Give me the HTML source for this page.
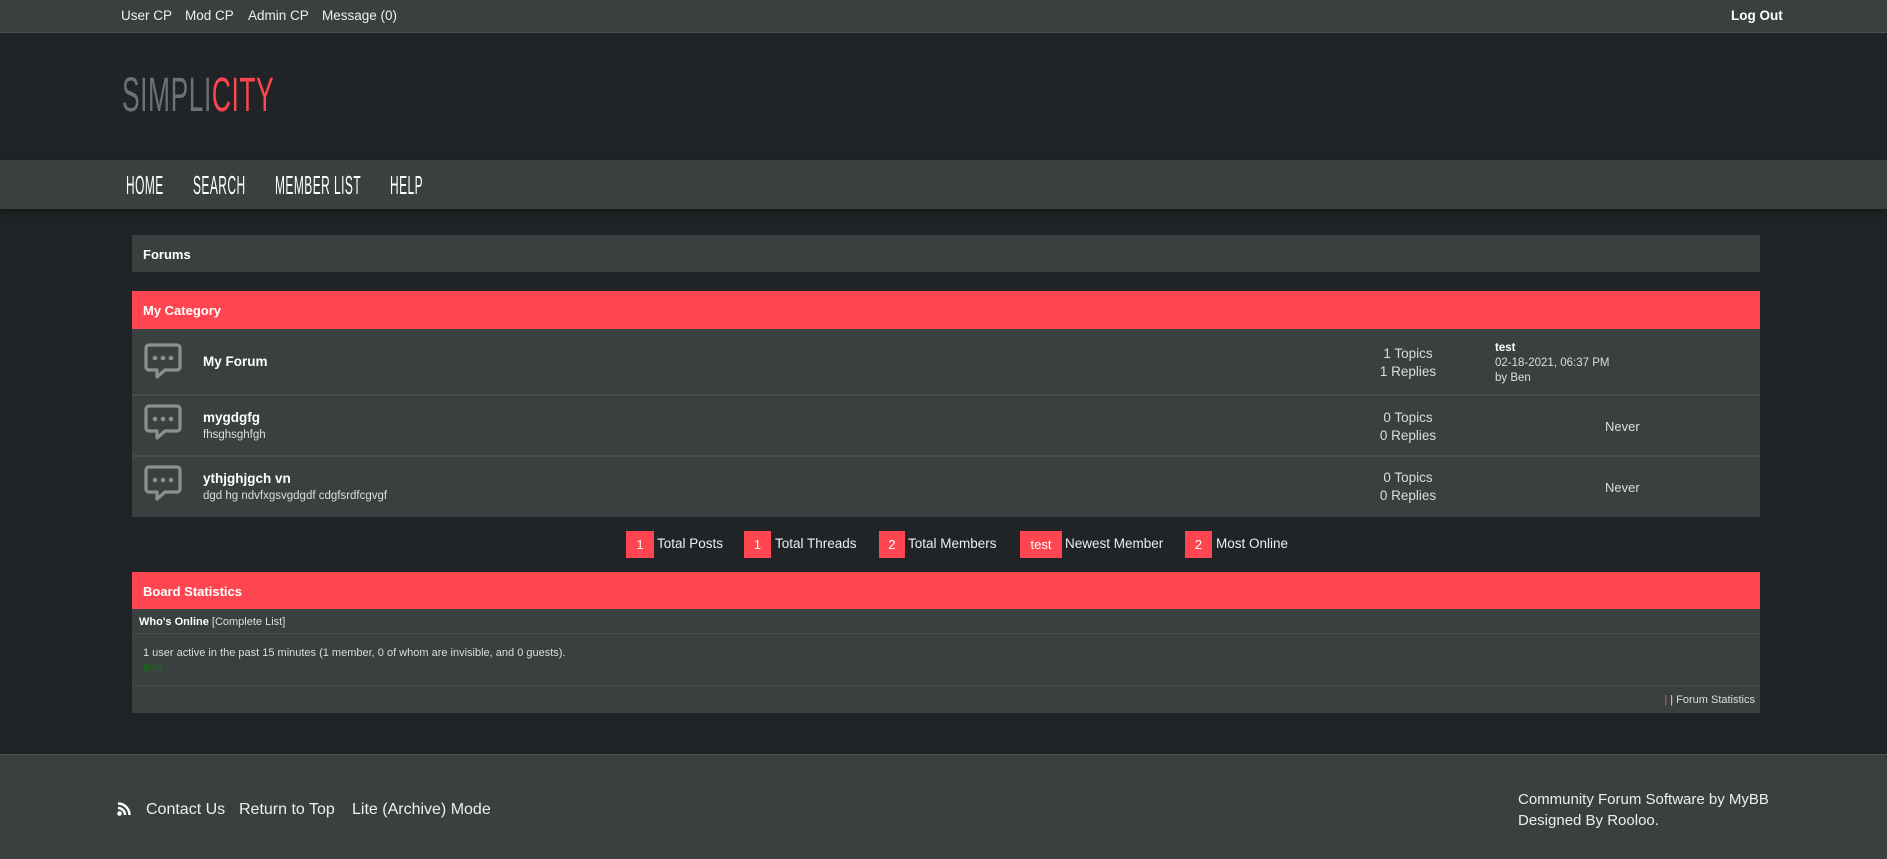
<!DOCTYPE html>
<html><head><meta charset="utf-8"><style>
*{margin:0;padding:0;box-sizing:border-box}
body{width:1887px;height:859px;background:#212426;font-family:"Liberation Sans",sans-serif;color:#fff;position:relative;overflow:hidden}
.a{position:absolute;white-space:nowrap}
.topbar{position:absolute;left:0;top:0;width:1887px;height:33px;background:#3a3f40;border-bottom:1px solid #4c5152}
.top{font-size:13.5px;top:8px;color:#eee}
.nav{position:absolute;left:0;top:160px;width:1887px;height:49px;background:#3a3f40;box-shadow:0 4px 8px rgba(0,0,0,.35)}
.navi{font-size:26px;top:170px;transform:scaleX(.46);transform-origin:left top;color:#fff;letter-spacing:1px}
.box{position:absolute;left:132px;width:1628px;background:#3a3f40}
.red{background:#ff4650}
.b{font-weight:bold}
.sep{position:absolute;left:132px;width:1628px;height:2px;background:#464b4c}
.rb{position:absolute;top:531px;height:27px;background:#ff4650;color:#fff;font-size:13px;text-align:center;line-height:27px}
.st{top:536px;font-size:13.5px;color:#eee}
.ft{font-size:16px;color:#eee}
</style></head><body>
<div class="topbar"></div>
<div class="a top" style="left:121px">User CP</div>
<div class="a top" style="left:185px">Mod CP</div>
<div class="a top" style="left:248px">Admin CP</div>
<div class="a top" style="left:322px">Message (0)</div>
<div class="a top b" style="left:1731px;color:#fff">Log Out</div>

<div class="a" style="left:122px;top:68px;font-size:48px;transform:scaleX(.55);transform-origin:left top;letter-spacing:1px"><span style="color:#6e7172">SIMPLI</span><span style="color:#ff4650">CITY</span></div>

<div class="nav"></div>
<div class="a navi" style="left:126px">HOME</div>
<div class="a navi" style="left:193px">SEARCH</div>
<div class="a navi" style="left:275px">MEMBER LIST</div>
<div class="a navi" style="left:390px">HELP</div>

<div class="box" style="top:235px;height:37px"></div>
<div class="a b" style="left:143px;top:247px;font-size:13px">Forums</div>

<div class="box red" style="top:291px;height:38px"></div>
<div class="a b" style="left:143px;top:303px;font-size:13px">My Category</div>

<div class="box" style="top:329px;height:188px"></div>
<div class="sep" style="top:394px"></div>
<div class="sep" style="top:455px"></div>

<svg class="a" style="left:0;top:0" width="300" height="520">
<g fill="none" stroke="#8d9091" stroke-width="3.2" stroke-linejoin="round">
<path d="M149 345h28a3 3 0 0 1 3 3v19a3 3 0 0 1-3 3h-12l-8 7v-7h-8a3 3 0 0 1-3-3v-19a3 3 0 0 1 3-3z"/>
<path d="M149 406h28a3 3 0 0 1 3 3v19a3 3 0 0 1-3 3h-12l-8 7v-7h-8a3 3 0 0 1-3-3v-19a3 3 0 0 1 3-3z"/>
<path d="M149 467h28a3 3 0 0 1 3 3v19a3 3 0 0 1-3 3h-12l-8 7v-7h-8a3 3 0 0 1-3-3v-19a3 3 0 0 1 3-3z"/>
</g>
<g fill="#8d9091">
<circle cx="155" cy="358" r="2.3"/><circle cx="163" cy="358" r="2.3"/><circle cx="171" cy="358" r="2.3"/>
<circle cx="155" cy="419" r="2.3"/><circle cx="163" cy="419" r="2.3"/><circle cx="171" cy="419" r="2.3"/>
<circle cx="155" cy="480" r="2.3"/><circle cx="163" cy="480" r="2.3"/><circle cx="171" cy="480" r="2.3"/>
</g></svg>

<div class="a b" style="left:203px;top:354px;font-size:13.5px">My Forum</div>
<div class="a b" style="left:203px;top:410px;font-size:13.5px">mygdgfg</div>
<div class="a" style="left:203px;top:429px;font-size:11.5px;color:#ddd">fhsghsghfgh</div>
<div class="a b" style="left:203px;top:471px;font-size:13.5px">ythjghjgch vn</div>
<div class="a" style="left:203px;top:490px;font-size:11.5px;color:#ddd">dgd hg ndvfxgsvgdgdf cdgfsrdfcgvgf</div>

<div class="a" style="left:1358px;width:100px;text-align:center;top:345px;font-size:13.5px;line-height:18px;color:#ddd">1 Topics<br>1 Replies</div>
<div class="a" style="left:1358px;width:100px;text-align:center;top:409px;font-size:13.5px;line-height:18px;color:#ddd">0 Topics<br>0 Replies</div>
<div class="a" style="left:1358px;width:100px;text-align:center;top:469px;font-size:13.5px;line-height:18px;color:#ddd">0 Topics<br>0 Replies</div>
<div class="a" style="left:1495px;top:341px;font-size:11.5px;line-height:15px;color:#ddd"><b style="color:#fff">test</b><br>02-18-2021, 06:37 PM<br>by Ben</div>
<div class="a" style="left:1605px;top:419px;font-size:13px;color:#ddd">Never</div>
<div class="a" style="left:1605px;top:480px;font-size:13px;color:#ddd">Never</div>

<div class="rb" style="left:626px;width:28px">1</div><div class="a st" style="left:657px">Total Posts</div>
<div class="rb" style="left:744px;width:27px">1</div><div class="a st" style="left:775px">Total Threads</div>
<div class="rb" style="left:879px;width:26px">2</div><div class="a st" style="left:908px">Total Members</div>
<div class="rb" style="left:1020px;width:42px">test</div><div class="a st" style="left:1065px">Newest Member</div>
<div class="rb" style="left:1185px;width:27px">2</div><div class="a st" style="left:1216px">Most Online</div>

<div class="box red" style="top:572px;height:37px"></div>
<div class="a b" style="left:143px;top:584px;font-size:13px">Board Statistics</div>
<div class="box" style="top:609px;height:104px"></div>
<div class="sep" style="top:633px;height:1px"></div>
<div class="sep" style="top:685px;height:1px"></div>
<div class="a" style="left:139px;top:616px;font-size:11px;color:#ddd"><b style="color:#fff">Who's Online</b> [Complete List]</div>
<div class="a" style="left:143px;top:647px;font-size:11px;color:#ddd">1 user active in the past 15 minutes (1 member, 0 of whom are invisible, and 0 guests).</div>
<div class="a" style="left:143px;top:662px;font-size:11px;color:#0a7a0a;font-style:italic">Ben</div>
<div class="a" style="left:1655px;top:694px;font-size:11px;color:#ddd;width:100px;text-align:right"><span style="color:#ff4650">|</span> | Forum Statistics</div>

<div class="a" style="left:0;top:754px;width:1887px;height:105px;background:#3a3f40;border-top:1px solid #4c5152"></div>
<svg class="a" style="left:117px;top:802px" width="14" height="14"><circle cx="2.5" cy="11.5" r="2.3" fill="#fff"/><path d="M1 6a7 7 0 0 1 7 7" stroke="#fff" stroke-width="2.5" fill="none"/><path d="M1 1.5a11.5 11.5 0 0 1 11.5 11.5" stroke="#fff" stroke-width="2.5" fill="none"/></svg>
<div class="a ft" style="left:146px;top:801px">Contact Us</div>
<div class="a ft" style="left:239px;top:801px">Return to Top</div>
<div class="a ft" style="left:352px;top:801px">Lite (Archive) Mode</div>
<div class="a" style="left:1518px;top:789px;font-size:15px;line-height:21px;color:#eee">Community Forum Software by MyBB<br>Designed By Rooloo.</div>
</body></html>
